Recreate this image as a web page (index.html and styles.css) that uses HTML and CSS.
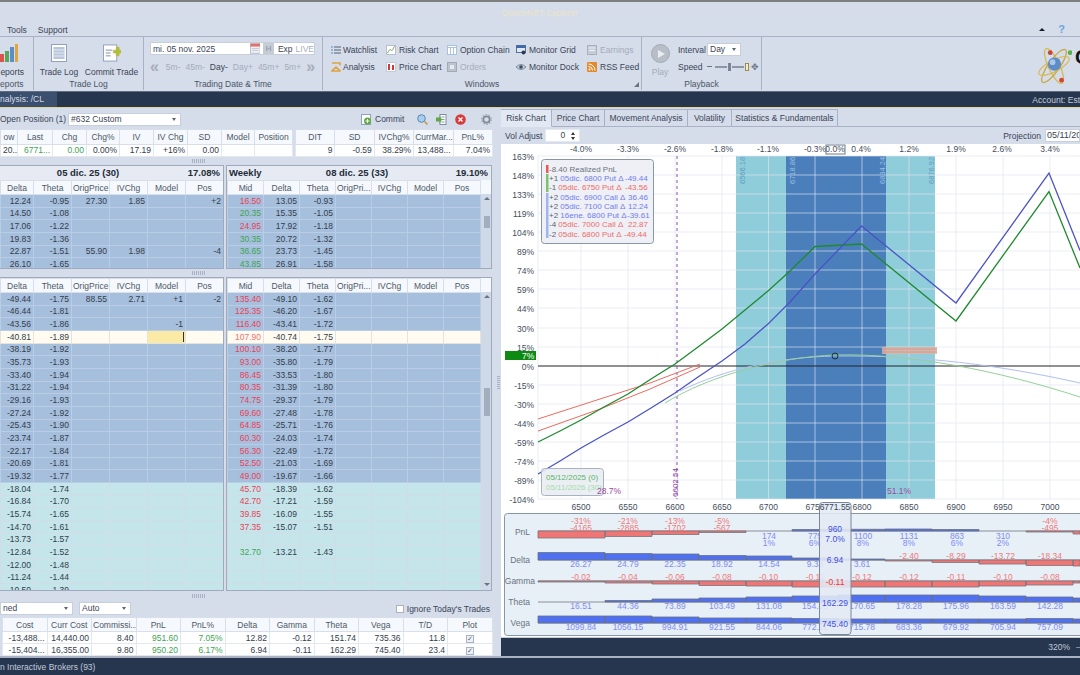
FILE: index.html
```html
<!DOCTYPE html>
<html lang="en">
<head>
<meta charset="utf-8">
<title>OptionNET Explorer</title>
<link rel="stylesheet" href="styles.css">
</head>
<body>
<div class="app">
  <div class="titlebar"><span>OptionNET Explorer</span></div>
  <div class="menubar">
    <span class="menu-item">Tools</span><span class="menu-item">Support</span>
    <span class="menu-right"><span class="collapse"></span><span class="help">?</span></span>
  </div>
  <div class="ribbon">
    <section class="group g1">
      <div class="group-body"><div class="big">
        <svg class="ic-big" viewBox="0 0 18 18"><rect x="0" y="10" width="4" height="8" fill="#d9534f"/><rect x="5" y="7" width="4" height="11" fill="#5aa55a"/><rect x="10" y="3" width="4" height="15" fill="#5b8fc9"/><rect x="15" y="0" width="3" height="18" fill="#e0a83c"/></svg>
        <span>eports</span></div></div>
      <div class="group-label">eports</div>
    </section>
    <section class="group g2">
      <div class="group-body">
        <div class="big tl">
          <svg class="ic-big" viewBox="0 0 18 18"><rect x="1.5" y="0.5" width="15" height="17" fill="#fff" stroke="#8fa1bd"/><rect x="3.5" y="3" width="11" height="12" fill="#b8c6dc"/><path d="M3.5 6h11M3.5 9h11M3.5 12h11" stroke="#e6ebf3"/></svg>
          <span>Trade Log</span></div>
        <div class="big ct">
          <svg class="ic-big" viewBox="0 0 19 18"><rect x="0.5" y="0.5" width="14" height="17" fill="#fff" stroke="#8fa1bd"/><path d="M3 6h7M3 9h5M3 12h5" stroke="#7f8c9e"/><path d="M11 6h3V3h3v3h2v3h-2v3h-3V9h-3z" fill="#a4c43c" stroke="#d6a92c" stroke-width=".6"/></svg>
          <span>Commit Trade</span></div>
      </div>
      <div class="group-label">Trade Log</div>
    </section>
    <section class="group g3">
      <div class="date-row">
        <span class="date-input"><span class="date-text">mi. 05 nov. 2025</span>
          <svg class="ic-cal" viewBox="0 0 11 11"><rect x=".5" y=".5" width="10" height="10" fill="#eef1f6" stroke="#b7bfcc"/><rect x=".5" y=".5" width="10" height="3" fill="#e2736a"/><path d="M2 5.5h7M2 7.5h7" stroke="#c4cad6"/></svg>
          <span class="step-btn">|-|</span><span class="exp">Exp</span><span class="live">LIVE</span></span>
      </div>
      <div class="nav-row">
        <span class="chev">«</span><span class="dim">5m-</span><span class="dim">45m-</span><span class="on">Day-</span><span class="dim">Day+</span><span class="dim">45m+</span><span class="dim">5m+</span><span class="chev">»</span>
      </div>
      <div class="group-label">Trading Date &amp; Time</div>
    </section>
    <section class="group g4">
      <div class="win-grid">
        <span class="win"><svg class="ic" viewBox="0 0 10 10"><path d="M3 2h7M3 5h7M3 8h7" stroke="#50627c"/><path d="M0 2h2M0 5h2M0 8h2" stroke="#4f8bd0"/></svg>Watchlist</span>
        <span class="win"><svg class="ic" viewBox="0 0 10 10"><rect x=".5" y=".5" width="9" height="9" fill="#fff" stroke="#b7bfcc"/><path d="M1 8C3 8 3 3 5 5s2-3 4-4" fill="none" stroke="#7aa35a"/></svg>Risk Chart</span>
        <span class="win"><svg class="ic" viewBox="0 0 10 10"><rect x=".5" y=".5" width="9" height="9" fill="#fff" stroke="#a9c2e2"/><path d="M0 2.5h10M3.5 2v8M6.5 2v8" stroke="#a9c2e2"/></svg>Option Chain</span>
        <span class="win"><svg class="ic" viewBox="0 0 10 10"><rect x=".5" y=".5" width="9" height="7" fill="#dfe7f2" stroke="#50729c"/><rect x=".5" y=".5" width="9" height="2.5" fill="#3e69a8"/><circle cx="7.5" cy="7.5" r="2" fill="#2f3b4d"/></svg>Monitor Grid</span>
        <span class="win off"><svg class="ic" viewBox="0 0 10 10"><rect x=".5" y=".5" width="9" height="9" fill="#c6ccd8" stroke="#aab2c0"/><path d="M2 3h6M2 5.500h6" stroke="#eef1f6"/></svg>Earnings</span>
        <span class="win"><svg class="ic" viewBox="0 0 10 10"><path d="M1 1h8v2.200M9 8.800V9H1l4-4z" fill="none" stroke="#e0a23c" stroke-width="1.600"/></svg>Analysis</span>
        <span class="win"><svg class="ic" viewBox="0 0 10 10"><rect x=".5" y=".5" width="9" height="9" fill="#fff" stroke="#c4cad6"/><rect x="2" y="2" width="2" height="6" fill="#d43838"/><rect x="6" y="3" width="2" height="5" fill="#d43838"/></svg>Price Chart</span>
        <span class="win off"><svg class="ic" viewBox="0 0 10 10"><rect x=".5" y=".5" width="9" height="9" fill="#bcc3cf" stroke="#a2aab8"/><rect x="3" y="3" width="4" height="4" fill="#e6eaf1"/></svg>Orders</span>
        <span class="win"><svg class="ic" viewBox="0 0 10 10"><path d="M0 5Q5 0 10 5Q5 10 0 5z" fill="#c5d0de" stroke="#5b6b80" stroke-width=".7"/><circle cx="5" cy="5" r="1.800" fill="#3c4a5e"/></svg>Monitor Dock</span>
        <span class="win"><svg class="ic" viewBox="0 0 10 10"><rect width="10" height="10" rx="1" fill="#e58a2a"/><circle cx="2.500" cy="7.500" r="1" fill="#fff"/><path d="M1.500 4.500a4 4 0 0 1 4 4M1.500 2a6.500 6.500 0 0 1 6.500 6.500" fill="none" stroke="#fff"/></svg>RSS Feed</span>
      </div>
      <div class="group-label">Windows<span class="launcher"></span></div>
    </section>
    <section class="group g5">
      <div class="play-wrap">
        <div class="play"><span class="play-btn"><span class="play-tri"></span></span><span class="play-txt">Play</span></div>
        <div class="speed">
          <div class="sp-row"><span class="sp-lbl">Interval</span><span class="select sel-day">Day<i class="caret"></i></span></div>
          <div class="sp-row"><span class="sp-lbl">Speed</span><span class="slider"><i class="sl-minus"></i><i class="sl-track"></i><i class="sl-thumb"></i><i class="sl-track short"></i><i class="sl-thumb hollow"></i><i class="sl-plus">✥</i></span></div>
        </div>
      </div>
      <div class="group-label">Playback</div>
    </section>
    <div class="logo">
      <svg class="atom" viewBox="0 0 38 42">
        <ellipse cx="19" cy="22" rx="6" ry="20" fill="none" stroke="#d8b84c" stroke-width="1.300" transform="rotate(-25 19 22)"/>
        <ellipse cx="19" cy="22" rx="6" ry="21" fill="none" stroke="#c9a63a" stroke-width="1.300" transform="rotate(35 19 22)"/>
        <ellipse cx="19" cy="22" rx="18" ry="6" fill="none" stroke="#d8b84c" stroke-width="1.200" transform="rotate(-28 19 22)"/>
        <circle cx="19.500" cy="20" r="7" fill="#5d8cc6"/><circle cx="17.500" cy="18" r="3" fill="#a9c8ea"/>
        <circle cx="15" cy="8" r="2.500" fill="#c8443a"/><circle cx="36" cy="8" r="2.500" fill="#58b04c"/><circle cx="27" cy="37" r="2.500" fill="#d0443a"/>
      </svg>
      <span class="logo-o">O</span>
    </div>
  </div>
  <div class="navbar"><span class="nav-tab">nalysis: /CL</span><span class="account">Account: Est</span></div>
  <div class="main">
    <div class="left">
      <div class="pos-bar">
        <span class="pos-lbl">Open Position (1)</span>
        <span class="select sel-pos">#632 Custom<i class="caret"></i></span>
        <span class="commit"><svg class="ic-c" viewBox="0 0 11 11"><rect x=".5" y=".5" width="9" height="10" fill="#fff" stroke="#8fa1bd"/><circle cx="6.500" cy="7" r="3.500" fill="#5fa845"/><path d="M6.500 5v4M4.500 7h4" stroke="#fff"/></svg>Commit</span>
        <svg class="tool t1" viewBox="0 0 11 11"><circle cx="4.500" cy="4.500" r="3.800" fill="#a9cdee" stroke="#5b85b5"/><path d="M7.500 7.500L10.500 10.500" stroke="#c99a44" stroke-width="1.600"/></svg>
        <svg class="tool t2" viewBox="0 0 11 11"><rect x="4" y=".5" width="6" height="10" fill="#fff" stroke="#7f8c9e"/><path d="M5.500 3h3M5.500 5.500h3M5.500 8h3" stroke="#8a97a9"/><path d="M0 3.500h3.500v-2L6 5.500 3.500 9.500v-2H0z" fill="#5fa845"/></svg>
        <svg class="tool t3" viewBox="0 0 11 11"><circle cx="5.500" cy="5.500" r="5.300" fill="#d63a3a"/><path d="M3.500 3.500l4 4M7.500 3.500l-4 4" stroke="#fff" stroke-width="1.300"/></svg>
        <svg class="tool t4" viewBox="0 0 11 11"><circle cx="5.500" cy="5.500" r="3.200" fill="none" stroke="#7f8a9a" stroke-width="1.800"/><circle cx="5.500" cy="5.500" r="4.800" fill="none" stroke="#9aa4b2" stroke-width="1.200" stroke-dasharray="1.500 1.500"/></svg>
      </div>
      <div class="summary">
        <table class="tbl sum-a">
          <tr><th>ow<th>Last<th>Chg<th>Chg%<th>IV<th>IV Chg<th>SD<th>Model<th>Position
          <tr><td>20...<td class="gr">6771...<td class="gr">0.00<td>0.00%<td>17.19<td>+16%<td>0.00<td><td>
        </table>
        <table class="tbl sum-b">
          <tr><th>DIT<th>SD<th>IVChg%<th>CurrMar...<th>PnL%
          <tr><td>9<td>-0.59<td>38.29%<td>13,488...<td>7.04%
        </table>
      </div>
      <div class="grip-h"><i></i></div>
      <div class="chain-row top">
        <div class="chain cl">
          <div class="band"><b class="band-c">05 dic. 25 (30)</b><b class="band-r">17.08%</b></div>
          <table class="tbl ct-l">
            <tr><th>Delta<th>Theta<th>OrigPrice<th>IVChg<th>Model<th>Pos
            <tr class="b"><td>12.24<td>-0.95<td>27.30<td>1.85<td><td>+2
            <tr class="b"><td>14.50<td>-1.08<td><td><td><td>
            <tr class="b"><td>17.06<td>-1.22<td><td><td><td>
            <tr class="b"><td>19.83<td>-1.36<td><td><td><td>
            <tr class="b"><td>22.87<td>-1.51<td>55.90<td>1.98<td><td>-4
            <tr class="b"><td>26.10<td>-1.65<td><td><td><td>
          </table>
        </div>
        <div class="chain cr">
          <div class="band"><b class="band-l">Weekly</b><b class="band-c">08 dic. 25 (33)</b><b class="band-r">19.10%</b></div>
          <div class="chain-flex">
            <table class="tbl ct-r">
              <tr><th>Mid<th>Delta<th>Theta<th>OrigPri...<th>IVChg<th>Model<th>Pos
              <tr class="b"><td class="re">16.50<td>13.05<td>-0.93<td><td><td><td>
              <tr class="b"><td class="gr">20.35<td>15.35<td>-1.05<td><td><td><td>
              <tr class="b"><td class="re">24.95<td>17.92<td>-1.18<td><td><td><td>
              <tr class="b"><td class="gr">30.35<td>20.72<td>-1.32<td><td><td><td>
              <tr class="b"><td class="gr">36.65<td>23.73<td>-1.45<td><td><td><td>
              <tr class="b"><td class="gr">43.85<td>26.91<td>-1.58<td><td><td><td>
            </table>
            <div class="sbar"><span class="th-hd"></span><i class="up"></i><i class="thumb th-a"></i><i class="dn"></i></div>
          </div>
        </div>
      </div>
      <div class="grip-h g2h"><i></i></div>
      <div class="chain-row low">
        <div class="chain cl">
          <table class="tbl ct-l">
            <tr><th>Delta<th>Theta<th>OrigPrice<th>IVChg<th>Model<th>Pos
            <tr class="b"><td>-49.44<td>-1.75<td>88.55<td>2.71<td>+1<td>-2
            <tr class="b"><td>-46.44<td>-1.81<td><td><td><td>
            <tr class="b"><td>-43.56<td>-1.86<td><td><td>-1<td>
            <tr class="y"><td>-40.81<td>-1.89<td><td><td class="edit"><i class="cursor"></i><td>
            <tr class="b"><td>-38.19<td>-1.92<td><td><td><td>
            <tr class="b"><td>-35.73<td>-1.93<td><td><td><td>
            <tr class="b"><td>-33.40<td>-1.94<td><td><td><td>
            <tr class="b"><td>-31.22<td>-1.94<td><td><td><td>
            <tr class="b"><td>-29.16<td>-1.93<td><td><td><td>
            <tr class="b"><td>-27.24<td>-1.92<td><td><td><td>
            <tr class="b"><td>-25.43<td>-1.90<td><td><td><td>
            <tr class="b"><td>-23.74<td>-1.87<td><td><td><td>
            <tr class="b"><td>-22.17<td>-1.84<td><td><td><td>
            <tr class="b"><td>-20.69<td>-1.81<td><td><td><td>
            <tr class="b"><td>-19.32<td>-1.77<td><td><td><td>
            <tr class="c"><td>-18.04<td>-1.74<td><td><td><td>
            <tr class="c"><td>-16.84<td>-1.70<td><td><td><td>
            <tr class="c"><td>-15.74<td>-1.65<td><td><td><td>
            <tr class="c"><td>-14.70<td>-1.61<td><td><td><td>
            <tr class="c"><td>-13.73<td>-1.57<td><td><td><td>
            <tr class="c"><td>-12.84<td>-1.52<td><td><td><td>
            <tr class="c"><td>-12.00<td>-1.48<td><td><td><td>
            <tr class="c"><td>-11.24<td>-1.44<td><td><td><td>
            <tr class="c"><td>-10.50<td>-1.39<td><td><td><td>
          </table>
        </div>
        <div class="chain cr">
          <div class="chain-flex">
            <table class="tbl ct-r">
              <tr><th>Mid<th>Delta<th>Theta<th>OrigPri...<th>IVChg<th>Model<th>Pos
              <tr class="b"><td class="re">135.40<td>-49.10<td>-1.62<td><td><td><td>
              <tr class="b"><td class="re">125.35<td>-46.20<td>-1.67<td><td><td><td>
              <tr class="b"><td class="re">116.40<td>-43.41<td>-1.72<td><td><td><td>
              <tr class="y"><td class="re">107.90<td>-40.74<td>-1.75<td><td><td><td>
              <tr class="b"><td class="re">100.10<td>-38.20<td>-1.77<td><td><td><td>
              <tr class="b"><td class="re">93.00<td>-35.80<td>-1.79<td><td><td><td>
              <tr class="b"><td class="re">86.45<td>-33.53<td>-1.80<td><td><td><td>
              <tr class="b"><td class="re">80.35<td>-31.39<td>-1.80<td><td><td><td>
              <tr class="b"><td class="re">74.75<td>-29.37<td>-1.79<td><td><td><td>
              <tr class="b"><td class="re">69.60<td>-27.48<td>-1.78<td><td><td><td>
              <tr class="b"><td class="re">64.85<td>-25.71<td>-1.76<td><td><td><td>
              <tr class="b"><td class="re">60.30<td>-24.03<td>-1.74<td><td><td><td>
              <tr class="b"><td class="re">56.30<td>-22.49<td>-1.72<td><td><td><td>
              <tr class="b"><td class="re">52.50<td>-21.03<td>-1.69<td><td><td><td>
              <tr class="b"><td class="re">49.00<td>-19.67<td>-1.66<td><td><td><td>
              <tr class="c"><td class="re">45.70<td>-18.39<td>-1.62<td><td><td><td>
              <tr class="c"><td class="re">42.70<td>-17.21<td>-1.59<td><td><td><td>
              <tr class="c"><td class="re">39.85<td>-16.09<td>-1.55<td><td><td><td>
              <tr class="c"><td class="re">37.35<td>-15.07<td>-1.51<td><td><td><td>
              <tr class="c"><td><td><td><td><td><td><td>
              <tr class="c"><td class="gr">32.70<td>-13.21<td>-1.43<td><td><td><td>
              <tr class="c"><td><td><td><td><td><td><td>
              <tr class="c"><td><td><td><td><td><td><td>
              <tr class="c"><td><td><td><td><td><td><td>
            </table>
            <div class="sbar"><span class="th-hd"></span><i class="up"></i><i class="thumb th-b"></i><i class="dn"></i></div>
          </div>
        </div>
      </div>
      <div class="grip-h g3h"><i></i></div>
      <div class="combo-row">
        <span class="select sel-ned">ned<i class="caret"></i></span>
        <span class="select sel-auto">Auto<i class="caret"></i></span>
        <span class="ignore"><i class="check-empty"></i>Ignore Today's Trades</span>
      </div>
      <table class="tbl pos">
        <tr><th>Cost<th>Curr Cost<th>Commissi...<th>PnL<th>PnL%<th>Delta<th>Gamma<th>Theta<th>Vega<th>T/D<th>Plot
        <tr><td>-13,488...<td>14,440.00<td>8.40<td class="gr">951.60<td class="gr">7.05%<td>12.82<td>-0.12<td>151.74<td>735.36<td>11.8<td class="ck"><i class="check">✓</i>
        <tr><td>-15,404...<td>16,355.00<td>9.80<td class="gr">950.20<td class="gr">6.17%<td>6.94<td>-0.11<td>162.29<td>745.40<td>23.4<td class="ck"><i class="check">✓</i>
      </table>
    </div>
    <div class="grip-v"><i></i></div>
    <div class="right">
      <div class="tabs">
        <span class="tab active">Risk Chart</span><span class="tab w53">Price Chart</span><span class="tab w83">Movement Analysis</span><span class="tab w44">Volatility</span><span class="tab w106">Statistics &amp; Fundamentals</span>
      </div>
      <div class="vol-bar">
        <span>Vol Adjust</span>
        <span class="spin">0<i class="spin-arrows"><i class="up"></i><i class="dn"></i></i></span>
        <span class="proj">Projection</span>
        <span class="proj-input">05/11/2026</span>
      </div>
      <svg class="chart" viewBox="501 145 579 493" width="579" height="493">
        <rect x="736" y="157" width="199" height="343" fill="#90cddb"/>
        <rect x="786" y="157" width="100" height="343" fill="#4b7fbb"/>
        <g class="grid">
          <path d="M538 157H1080M538 176H1080M538 195H1080M538 214H1080M538 233H1080M538 252H1080M538 271H1080M538 290H1080M538 309H1080M538 329H1080M538 348H1080M538 386H1080M538 405H1080M538 424H1080M538 443H1080M538 462H1080M538 481H1080M538 500H1080"/>
          <path d="M538 157V500M581 157V500M628 157V500M675 157V500M722 157V500M768.500 157V500M815 157V500M862 157V500M909 157V500M956 157V500M1003 157V500M1050 157V500"/>
        </g>
        <g class="axis-y">
          <text x="534" y="160">163%</text><text x="534" y="179">148%</text><text x="534" y="198">133%</text><text x="534" y="217">119%</text><text x="534" y="236">104%</text><text x="534" y="255">89%</text><text x="534" y="274">74%</text><text x="534" y="293">59%</text><text x="534" y="312">44%</text><text x="534" y="332">30%</text><text x="534" y="351">15%</text><text x="534" y="370">0%</text><text x="534" y="389">-15%</text><text x="534" y="408">-30%</text><text x="534" y="427">-44%</text><text x="534" y="446">-59%</text><text x="534" y="465">-74%</text><text x="534" y="484">-89%</text><text x="534" y="503">-104%</text>
        </g>
        <g class="axis-x">
          <text x="581" y="153">-4.0%</text><text x="628" y="153">-3.3%</text><text x="675" y="153">-2.6%</text><text x="722" y="153">-1.8%</text><text x="768" y="153">-1.1%</text><text x="815" y="153">-0.3%</text><text x="835" y="153">0.0%</text><text x="861" y="153">0.4%</text><text x="909" y="153">1.2%</text><text x="956" y="153">1.9%</text><text x="1002" y="153">2.6%</text><text x="1050" y="153">3.4%</text>
          <text x="581" y="511">6500</text><text x="628" y="511">6550</text><text x="675" y="511">6600</text><text x="722" y="511">6650</text><text x="768.500" y="511">6700</text><text x="815" y="511">6750</text><text x="862" y="511">6800</text><text x="909" y="511">6850</text><text x="956" y="511">6900</text><text x="1003" y="511">6950</text><text x="1050" y="511">7000</text>
        </g>
        <rect class="zero-box" x="826" y="146" width="19" height="9"/>
        <path class="zero" d="M538 367H1080"/>
        <path class="dash" d="M677 157V500"/>
        <g class="rot">
          <text class="rb" transform="translate(745 185) rotate(-90)">6566.18</text>
          <text class="rl" transform="translate(795 185) rotate(-90)">6718.86</text>
          <text class="rl" transform="translate(885 185) rotate(-90)">6834.24</text>
          <text class="rb" transform="translate(934 185) rotate(-90)">6876.92</text>
          <text class="rp" transform="translate(678 498) rotate(-90)">6602.54</text>
        </g>
        <path class="thin-r" d="M538 420L600 400L650 384L700 365"/>
        <path class="thin-r" d="M538 432L600 410L650 390L700 368"/>
        <path class="thin-b" d="M680 392C725 370 780 358 835 357C920 356 1000 366 1080 384"/>
        <path class="thin-g" d="M665 404C710 376 780 358 835 356C910 354 1000 372 1080 398"/>
        <rect class="tan" x="882" y="348" width="55" height="7"/>
        <path class="tan-l" d="M882 350H937M882 353H937"/>
        <circle class="spot" cx="835" cy="357" r="3"/>
        <path class="line-g" d="M538 443L560 432L581 421L604 408L628 395L651 380L675 365L698 348L722 330L745 311L768 292L790 272L815 247.500L861.500 245L956 322L1049 192.500L1080 269"/>
        <path class="line-b" d="M538 475L560 462L581 449L604 436L628 423L651 409L675 394L698 378L722 362L745 345L768 325L790 303L815 275L861.500 227L956 304L1049 174L1080 251.500"/>
        <rect class="tag" x="505" y="352" width="31" height="9"/>
        <text class="tag-t" x="522" y="360">7%</text>
        <g class="legend">
          <rect class="leg-box" x="541.500" y="160.500" width="112" height="84" rx="3"/>
          <rect x="546" y="166" width="2.500" height="8" fill="#e85a5a"/><rect x="546" y="175" width="2.500" height="18" fill="#7cc46c"/><rect x="546" y="194" width="2.500" height="45" fill="#9db6f0"/>
          <text class="lg" x="549" y="173">-8.40 Realized PnL</text>
          <text class="lb" x="549" y="182"><tspan class="lk">+1</tspan> 05dic. 6800 Put Δ <tspan x="625">-49.44</tspan></text>
          <text class="lr" x="549" y="191"><tspan class="lk">-1</tspan> 05dic. 6750 Put Δ <tspan x="625">-43.56</tspan></text>
          <text class="lb" x="549" y="201"><tspan class="lk">+2</tspan> 05dic. 6900 Call Δ <tspan x="628">36.46</tspan></text>
          <text class="lb" x="549" y="210"><tspan class="lk">+2</tspan> 05dic. 7100 Call Δ <tspan x="628">12.24</tspan></text>
          <text class="lb" x="549" y="219"><tspan class="lk">+2</tspan> 16ene. 6800 Put Δ <tspan x="627">-39.61</tspan></text>
          <text class="lr" x="549" y="228"><tspan class="lk">-4</tspan> 05dic. 7000 Call Δ <tspan x="628">22.87</tspan></text>
          <text class="lr" x="549" y="238"><tspan class="lk">-2</tspan> 05dic. 6800 Put Δ <tspan x="624">-49.44</tspan></text>
        </g>
        <rect class="date-box" x="541.500" y="469.500" width="62" height="27" rx="3"/>
        <text class="dg1" x="546" y="481">05/12/2025 (0)</text>
        <text class="dg2" x="546" y="491">05/11/2026 (30)</text>
        <text class="pct" x="597" y="495">28.7%</text>
        <text class="pct" x="887" y="495">51.1%</text>
        <rect class="panel" x="504.500" y="514.500" width="590" height="122" rx="3"/>
        <g class="rlabels">
          <text x="530" y="536">PnL</text><text x="530" y="564">Delta</text><text x="535" y="585">Gamma</text><text x="530" y="606">Theta</text><text x="530" y="627">Vega</text>
        </g>
        <path class="base" d="M538 532H1080M538 561H1080M538 582H1080M538 603H1080M538 624H1080"/>
        <path class="bar-r" d="M538 532h67v7h-67zM605 532h47v5.500h-47zM652 532h47v3.500h-47zM699 532h47v1.500h-47zM1026 532h47v1h-47zM1073 532h7v3h-7z"/>
        <path class="bar-b" d="M792 530.500h46v1.500h-46zM838 530.300h47v1.700h-47zM885 530h47v2h-47zM932 530.500h47v1.500h-47z"/>
        <path class="bar-b" d="M538 553.500h67v7.500h-67zM605 554.500h47v6.500h-47zM652 555h47v6h-47zM699 556.500h47v4.500h-47zM746 557h46v4h-46zM792 559h46v2h-46zM838 560h47v1h-47z"/>
        <path class="bar-r" d="M885 561h47v1h-47zM932 561h47v2.500h-47zM979 561h47v4h-47zM1026 561h47v5.500h-47zM1073 561h7v6h-7z"/>
        <path class="bar-r" d="M538 582h67v1h-67zM605 582h47v2h-47zM652 582h47v3h-47zM699 582h47v4.500h-47zM746 582h46v5h-46zM792 582h46v6h-46zM838 582h47v6h-47zM885 582h47v6h-47zM932 582h47v6h-47zM979 582h47v5h-47zM1026 582h47v4h-47zM1073 582h7v2h-7z"/>
        <path class="bar-b" d="M605 601.500h47v1.500h-47zM652 600h47v3h-47zM699 599h47v4h-47zM746 598h46v5h-46zM792 597h46v6h-46zM838 596h47v7h-47zM885 596h47v7h-47zM932 596h47v7h-47zM979 597h47v6h-47zM1026 598h47v5h-47zM1073 599h7v4h-7z"/>
        <path class="bar-b" d="M538 617h67v7h-67zM605 617h47v7h-47zM652 618h47v6h-47zM699 619h47v5h-47zM746 619h46v5h-46zM792 619.500h46v4.500h-46zM838 620h47v4h-47zM885 620h47v4h-47zM932 620h47v4h-47zM979 620h47v4h-47zM1026 619.500h47v4.500h-47zM1073 620h7v4h-7z"/>
        <g class="v-r">
          <text x="581" y="525">-31%</text><text x="628" y="525">-21%</text><text x="675" y="525">-13%</text><text x="722" y="525">-5%</text>
          <text x="581" y="532">-4165</text><text x="628" y="532">-2885</text><text x="675" y="532">-1702</text><text x="722" y="532">-567</text>
          <text x="1050" y="525">-4%</text><text x="1050" y="532">-495</text>
          <text x="909" y="560">-2.40</text><text x="956" y="560">-8.29</text><text x="1003" y="560">-13.72</text><text x="1050" y="560">-18.34</text>
          <text x="581" y="581">-0.02</text><text x="628" y="581">-0.04</text><text x="675" y="581">-0.06</text><text x="722" y="581">-0.08</text><text x="768.500" y="581">-0.10</text><text x="815" y="581">-0.11</text><text x="862" y="581">-0.12</text><text x="909" y="581">-0.12</text><text x="956" y="581">-0.11</text><text x="1003" y="581">-0.10</text><text x="1050" y="581">-0.08</text>
        </g>
        <g class="v-b">
          <text x="769" y="540">174</text><text x="769" y="547">1%</text><text x="815" y="540">775</text><text x="815" y="547">6%</text><text x="863" y="540">1100</text><text x="863" y="547">8%</text><text x="909" y="540">1131</text><text x="909" y="547">8%</text><text x="957" y="540">863</text><text x="957" y="547">6%</text><text x="1003" y="540">310</text><text x="1003" y="547">2%</text>
          <text x="581" y="568">26.27</text><text x="628" y="568">24.79</text><text x="675" y="568">22.35</text><text x="722" y="568">18.92</text><text x="769" y="568">14.54</text><text x="815" y="568">9.33</text><text x="862" y="568">3.61</text>
          <text x="581" y="610">16.51</text><text x="628" y="610">44.36</text><text x="675" y="610">73.89</text><text x="722" y="610">103.49</text><text x="769" y="610">131.08</text><text x="815" y="610">154.38</text><text x="862" y="610">170.65</text><text x="909" y="610">178.28</text><text x="956" y="610">175.96</text><text x="1003" y="610">163.59</text><text x="1050" y="610">142.28</text>
          <text x="581" y="631">1099.84</text><text x="628" y="631">1056.15</text><text x="675" y="631">994.91</text><text x="722" y="631">921.55</text><text x="769" y="631">844.06</text><text x="815" y="631">772.11</text><text x="862" y="631">715.78</text><text x="909" y="631">683.36</text><text x="956" y="631">679.92</text><text x="1003" y="631">705.94</text><text x="1050" y="631">757.09</text>
        </g>
        <rect class="cross" x="819.500" y="503.500" width="31.500" height="132" rx="3"/>
        <text class="cross-h" x="835" y="511">6771.55</text>
        <g class="cross-v">
          <text x="835" y="533">960</text><text x="835" y="543">7.0%</text><text x="835" y="564">6.94</text><text class="cr-r" x="835" y="586">-0.11</text><text x="835" y="607">162.29</text><text x="835" y="628">745.40</text>
        </g>
      </svg>
      <div class="zoom-bar"><span>320%</span><span class="zoom-dash">—</span></div>
    </div>
  </div>
  <div class="status-gap"></div>
  <div class="status">n Interactive Brokers (93)</div>
</div>
</body>
</html>
```
FILE: styles.css
```css
*{box-sizing:border-box}
html,body{margin:0;padding:0;height:100%}
body{width:1080px;height:675px;overflow:hidden;background:#d5dcea;font-family:"Liberation Sans","Noto Sans",Arial,sans-serif;font-size:8.5px;color:#3a4556}
.app{width:1080px;height:675px;display:flex;flex-direction:column;overflow:hidden}
i{font-style:normal;display:block}

.titlebar{height:22px;border-top:2px solid #7f7f80;display:flex;justify-content:center;align-items:center;color:#ece4c8;font-size:8.5px;flex:none;padding-top:1px}
.menubar{height:15px;flex:none;display:flex;align-items:center;padding-left:7px;padding-top:1px;border-bottom:1px solid #a9b2c4;position:relative}
.menu-item{margin-right:11px}
.menu-right{margin-left:auto;display:flex;align-items:center;padding-right:15px;gap:13px}
.collapse{width:0;height:0;border:3px solid transparent;border-bottom:3px solid #111d30;border-top:0}
.help{color:#6fa5d8;font-weight:bold;font-size:11px;line-height:11px}

.ribbon{height:55px;flex:none;display:flex;border-bottom:1px solid #5f6c82;overflow:hidden}
.group{position:relative;flex:none;border-right:1px solid #a9b2c4;height:53px;display:flex;flex-direction:column;padding-top:4px}
.group-label{position:absolute;left:0;right:0;bottom:0;height:12px;line-height:12px;text-align:center;color:#4a5566}
.group-body{display:flex;height:36px}
.g1{width:34px}
.g1 .big{align-items:flex-end;width:24px}
.g1 .ic-big{margin-right:6px}
.g1 .group-label{text-align:left}
.g2{width:110px}
.g2 .group-body{padding-left:7px;gap:9px}
.g3{width:179px;padding-left:6px}
.g4{width:319px}
.g5{width:120px}
.big{display:flex;flex-direction:column;align-items:center;justify-content:space-between;height:36px;padding-top:3px;white-space:nowrap;color:#3a4556}
.ic-big{width:18px;height:18px}
.tl{width:36px}
.ct{width:51px}

.date-row{height:17px;display:flex;align-items:flex-start;padding-top:1px}
.date-input{width:165px;height:13px;background:#fff;border:1px solid #c7cfdc;display:flex;align-items:center;font-size:8.5px;padding-left:2px}
.date-text{width:100px}
.ic-cal{width:11px;height:11px}
.step-btn{width:11px;height:11px;margin-left:3px;background:#c6ccd6;font-size:6px;text-align:center;line-height:11px;color:#5a6472}
.exp{margin-left:4px}
.live{margin-left:3px;color:#a9b0bd}
.nav-row{display:flex;height:17px;align-items:center;color:#3a4556}
.nav-row span{margin-right:5px;white-space:nowrap}
.nav-row .dim{color:#a5acba}
.nav-row .chev{color:#a5acba;font-size:16px;line-height:12px;font-weight:bold;width:10px;margin-right:6px}

.win-grid{display:grid;grid-template-columns:55px 61px 69px 71px 55px;grid-template-rows:17px 17px;padding-left:8px}
.win{display:flex;align-items:center;gap:3px;white-space:nowrap;color:#3a4556}
.win:nth-child(5n+1){gap:2px}
.win.off{color:#a5acba}
.ic{width:10px;height:10px;flex:none}
.launcher{position:absolute;right:2px;bottom:3px;width:0;height:0;border-left:5px solid transparent;border-bottom:5px solid #6a7484}

.play-wrap{display:flex;padding-left:7px}
.play{width:22px;display:flex;flex-direction:column;align-items:center;margin-right:7px;padding-top:3px;color:#a5acba}
.play-btn{width:19px;height:19px;border-radius:50%;background:#b8bec8;border:1px solid #a5abb6;display:flex;align-items:center;justify-content:center}
.play-tri{width:0;height:0;border-left:7px solid #e9ecf1;border-top:4.500px solid transparent;border-bottom:4.500px solid transparent;margin-left:2px}
.play-txt{margin-top:4px}
.sp-row{display:flex;align-items:center;height:17px}
.sp-lbl{width:29px}
.select{position:relative;display:block;background:#fff;border:1px solid #c7cfdc;height:13px;line-height:11px;padding-left:2px;font-size:8.5px;color:#3a4556}
.caret{position:absolute;right:4px;top:4px;width:0;height:0;border:2.500px solid transparent;border-top:3px solid #5a6472;border-bottom:0}
.sel-day{width:34px}
.slider{display:flex;align-items:center;height:8px;gap:1px}
.sl-minus{width:5px;height:1.500px;background:#6a7484;margin-right:2px}
.sl-track{width:12px;height:2px;background:#8d97a8}
.sl-track.short{width:12px}
.sl-thumb{width:3px;height:8px;background:#7a8696}
.sl-thumb.hollow{background:#f6edc8;border:1px solid #9a8c52;width:4px;height:8px}
.sl-plus{font-size:9px;line-height:8px;color:#6a7484;margin-left:1px}

.logo{flex:1;min-width:0;display:flex;align-items:center;padding-left:274px;overflow:hidden;gap:3px;height:53px}
.atom{width:36px;height:42px;flex:none;margin-top:2px}
.logo-o{font-size:20px;font-weight:bold;color:#111;margin-top:-13px;flex:none}

.navbar{height:16px;flex:none;background:#27364f;border-bottom:1px solid #e3d48d;color:#c2cada;display:flex;align-items:center;justify-content:space-between;position:relative}
.nav-tab{width:57px;background:#3b4f6e;height:15px;line-height:15px;color:#d6dce8}

.main{height:548px;flex:none;display:flex;overflow:hidden}
.left{width:497px;flex:none;display:flex;flex-direction:column;overflow:hidden}
.pos-bar{height:20px;flex:none;display:flex;align-items:center;padding-top:2px;position:relative;white-space:nowrap}
.pos-lbl{width:68px}
.sel-pos{width:113px}
.commit{display:flex;align-items:center;gap:3px;margin-left:180px;color:#3a4556}
.ic-c{width:11px;height:11px}
.tool{width:11px;height:11px;flex:none}
.t1{margin-left:13px}
.t2{margin-left:8px}
.t3{margin-left:8px}
.t4{margin-left:15px}

.tbl{table-layout:fixed;border-collapse:collapse;background:#fff}
.tbl th{font-weight:normal;background:#f5f8fc;color:#4d5868;height:14px;padding:0 1px;text-align:center;border:1px solid #d8dfea;white-space:nowrap;overflow:hidden}
.tbl td{height:12.667px;padding:0 2px;text-align:right;border:1px solid #e3e8ef;line-height:10px;white-space:nowrap;overflow:hidden;color:#333d4c}
.gr,.tbl td.gr{color:#3ea552}
.re,.tbl td.re{color:#ea3f58}
.b td{background:#a6bfdd;border-color:#b9cde4}
.y td{background:#fffbf0;border-color:#e6e4da}
.tbl .y td.re{color:#f07272}
.c td{background:#c4e5ea;border-color:#d2dce6}
.tbl td.edit{background:#fbe9a6;padding:0}
.cursor{width:1px;height:10px;background:#333;margin-left:35px}

.summary{height:29px;flex:none;display:flex;padding-top:1px;gap:2px}
.summary th{height:14px}
.summary td{height:12px;background:#fff}
.sum-a{width:292px}
.sum-a th:nth-child(1){width:17px}
.sum-a th:nth-child(2){width:35px}
.sum-a th:nth-child(3){width:34px}
.sum-a th:nth-child(4){width:33px}
.sum-a th:nth-child(5){width:34px}
.sum-a th:nth-child(6){width:34px}
.sum-a th:nth-child(7){width:34px}
.sum-a th:nth-child(8){width:33px}
.sum-a th:nth-child(9){width:38px}
.sum-b{width:197px}
.sum-b th{width:39.400px}

.grip-h{height:8px;flex:none;display:flex;justify-content:center;align-items:center;padding-right:100px}
.grip-h i,.grip-v i{width:13px;height:4px;background:repeating-linear-gradient(90deg,#a9b2c4 0 1px,transparent 1px 2px)}
.g2h{height:8px}
.g3h{height:10px}
.grip-v{width:3px;flex:none;display:flex;align-items:center;justify-content:center}
.grip-v i{width:3px;height:13px;background:repeating-linear-gradient(0deg,#a9b2c4 0 1px,transparent 1px 2px)}

.chain-row{display:flex;flex:none;gap:2px;overflow:hidden}
.chain-row.top{height:104px}
.chain-row.low{height:314px}
.chain{flex:none;overflow:hidden;border:1px solid #9fabbd;border-left:0;background:#d0d9e8}
.chain.cl{width:224px}
.chain.cr{width:266px;border-left:1px solid #9fabbd}
.band{height:14px;background:#e6eaf3;position:relative;text-align:center;line-height:14px;color:#222b38}
.band b{font-size:9.500px}
.cl .band{padding-right:47px}
.cr .band{padding-right:4px}
.band-l{position:absolute;left:2px}
.band-r{position:absolute;right:3px}
.ct-l{width:223px}
.ct-l th:nth-child(1){width:33px}
.ct-l th{width:38px}
.chain-flex{display:flex;height:100%}
.ct-r{width:253px;flex:none;align-self:flex-start}
.ct-r th:nth-child(n+1){width:36px}
.ct-r th:nth-child(7){width:37px}
.sbar{width:12px;flex:none;display:flex;flex-direction:column;align-items:center;position:relative}
.th-hd{width:12px;height:14px;background:#f5f8fc;flex:none}
.up{width:0;height:0;border:3px solid transparent;border-bottom:3px solid #6a7484;border-top:0;margin-top:3px}
.dn{width:0;height:0;border:3px solid transparent;border-top:3px solid #6a7484;border-bottom:0;position:absolute;bottom:4px;left:3px}
.thumb{width:6px;background:#a3adbd;position:absolute;left:3px}
.th-a{top:36px;height:12px}
.th-b{top:110px;height:28px}

.combo-row{height:16px;flex:none;display:flex;align-items:flex-start;padding-top:1px;position:relative}
.sel-ned{width:73px}
.sel-auto{width:52px;margin-left:6px}
.ignore{margin-left:auto;display:flex;align-items:center;gap:3px;padding-right:7px;height:13px;white-space:nowrap}
.check-empty{width:8px;height:8px;background:#fff;border:1px solid #a9b2c4}
.pos{width:490px;margin-left:2px;flex:none}
.pos th{width:44.500px}
.pos td{height:12px}
.ck{text-align:center !important}
.check{display:inline-block;width:8px;height:8px;border:1px solid #a9b2c4;background:#eef2f7;font-size:7px;line-height:6px;text-align:center;color:#5a6472}

.right{width:580px;flex:none;display:flex;flex-direction:column;overflow:hidden;border-left:1px solid #fff0}
.tabs{height:19px;flex:none;display:flex;padding-top:1px;border-bottom:1px solid #a9b2c4}
.tab{width:51px;height:18px;line-height:16px;text-align:center;border:1px solid #a9b2c4;border-left:0;white-space:nowrap;background:#d5dcea}
.tab.active{background:#e3e9f3;border-bottom:1px solid #e3e9f3}
.w53{width:53px}
.w83{width:83px}
.w44{width:44px}
.w106{width:106px}
.vol-bar{height:17px;flex:none;display:flex;align-items:center;padding-left:4px;white-space:nowrap}
.spin{position:relative;width:35px;height:13px;background:#fff;margin-left:3px;border:1px solid #e4e8ef;text-align:right;padding-right:14px;line-height:11px}
.spin-arrows{position:absolute;right:2px;top:2px;width:6px;height:8px}
.spin-arrows .up{margin:0;border-bottom-color:#333;border-width:2.500px;border-top:0;border-bottom-width:3px}
.spin-arrows .dn{bottom:0;left:0;border-top-color:#333;border-width:2.500px;border-bottom:0;border-top-width:3px}
.proj{margin-left:auto}
.proj-input{width:35px;height:13px;background:#fff;border:1px solid #c7cfdc;margin-left:4px;overflow:hidden;line-height:11px;padding-left:1px;font-size:9px}

.chart{flex:none;display:block;background:#fff;font-family:"Liberation Sans",Arial,sans-serif;font-size:8.500px}
.grid path{stroke:rgba(224,228,238,.65);stroke-width:1;fill:none}
.axis-y{transform:translateY(.6px)}
.axis-y text{text-anchor:end;fill:#444e5c}
.axis-x text{text-anchor:middle;fill:#444e5c}
.zero-box{fill:none;stroke:#6d7a8c}
.zero{stroke:#222;stroke-width:1}
.dash{stroke:#8e4ea8;stroke-width:1;stroke-dasharray:3 3;fill:none}
.rb{fill:#5e9cc0;font-size:7.500px}
.rl{fill:#9cc0e6;font-size:7.500px}
.rp{fill:#8a3f9e;font-size:8px}
.pct{fill:#a0479f}
.thin-r{stroke:#ea6a60;stroke-width:1;fill:none}
.thin-b{stroke:#b0bfee;stroke-width:1;fill:none}
.thin-g{stroke:#94d09a;stroke-width:1;fill:none}
.tan{fill:#d8b6a8;opacity:.85}
.tan-l{stroke:#e88a7a;stroke-width:.8;fill:none}
.spot{fill:#2f8a72;stroke:#1f2f3f;stroke-width:1;fill-opacity:.2}
.line-g{stroke:#1e8a2c;stroke-width:1.300;fill:none}
.line-b{stroke:#4b53c6;stroke-width:1.300;fill:none}
.tag{fill:#0d8a12}
.tag-t{fill:#fff;font-size:8.500px}
.leg-box{fill:#eef0f5;stroke:#8896a8}
.legend text{font-size:8px}
.lg{fill:#6a7480}
.lb{fill:#6f7cf0}
.lr{fill:#ee6a6a}
.lk{fill:#5a6472}
.date-box{fill:#e8ecf2;fill-opacity:.85;stroke:#a8b4c4}
.dg1{fill:#5cb56a;font-size:8px}
.dg2{fill:#a3dca8;font-size:8px}
.panel{fill:#e7eff7;stroke:#8896a8}
.rlabels text{text-anchor:end;fill:#6a7480}
.base{stroke:#8a8e96;stroke-width:1;fill:none}
.bar-r{fill:#f07676;stroke:#77757c;stroke-width:.8}
.bar-b{fill:#4f70f0;stroke:#6a7280;stroke-width:.8}
.v-r text{text-anchor:middle;fill:#f07a7a}
.v-b text{text-anchor:middle;fill:#7f8cf4}
.cross{fill:#e4eaf5;fill-opacity:.88;stroke:#7a8798}
.cross-h{text-anchor:middle;fill:#3a4556}
.cross-v text{text-anchor:middle;fill:#3f4fe0}
.cross-v .cr-r{fill:#e83838}

.zoom-bar{flex:1;min-height:0;background:#27364f;border-top:1px solid #c4cad6;display:flex;justify-content:flex-end;align-items:center;color:#c2cada;gap:6px}
.zoom-dash{width:4px;overflow:hidden}
.status-gap{flex:none;height:2px;background:#a9b2c4}
.status{flex:1;min-height:0;background:#27364f;color:#c2cada;line-height:14px;display:flex;align-items:center}
```
